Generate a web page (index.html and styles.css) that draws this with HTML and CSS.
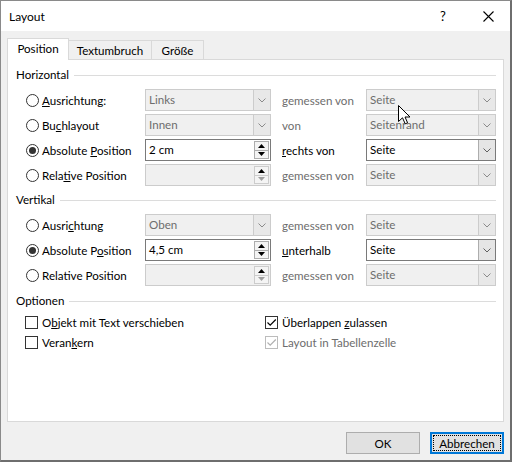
FILE: index.html
```html
<!DOCTYPE html>
<html lang="de">
<head>
<meta charset="utf-8">
<link rel="stylesheet" href="styles.css">
</head>
<body>
<div class="window">
  <div class="titlebar">
    <span class="title">Layout</span>
    <span class="tb-help">?</span>
    <span class="tb-close">
      <svg width="11" height="11" viewBox="0 0 11 11"><path d="M0.5 0.5 L10.5 10.5 M10.5 0.5 L0.5 10.5" stroke="#000" stroke-width="1.1" fill="none"/></svg>
    </span>
  </div>

  <div class="body">
    <div class="tabs">
      <div class="tab tab-active tab-pos">Position</div>
      <div class="tab tab-wrap">Textumbruch</div>
      <div class="tab tab-size">Größe</div>
    </div>

    <div class="panel">
      <div class="group-head"><span>Horizontal</span><div class="rule"></div></div>
      <div class="grid">
        <label class="opt"><span class="radio"></span><span><u>A</u>usrichtung:</span></label>
        <div class="combo disabled"><span class="combo-text">Links</span><span class="combo-btn"><svg width="8" height="5" viewBox="0 0 8 5"><path d="M0.5 0.5 L4 4 L7.5 0.5" stroke="#8a8a8a" fill="none"/></svg></span></div>
        <span class="lbl2 dim">gemessen von</span>
        <div class="combo disabled"><span class="combo-text">Seite</span><span class="combo-btn"><svg width="8" height="5" viewBox="0 0 8 5"><path d="M0.5 0.5 L4 4 L7.5 0.5" stroke="#8a8a8a" fill="none"/></svg></span></div>

        <label class="opt"><span class="radio"></span><span>Bu<u>c</u>hlayout</span></label>
        <div class="combo disabled"><span class="combo-text">Innen</span><span class="combo-btn"><svg width="8" height="5" viewBox="0 0 8 5"><path d="M0.5 0.5 L4 4 L7.5 0.5" stroke="#8a8a8a" fill="none"/></svg></span></div>
        <span class="lbl2 dim">von</span>
        <div class="combo disabled"><span class="combo-text">Seitenrand</span><span class="combo-btn"><svg width="8" height="5" viewBox="0 0 8 5"><path d="M0.5 0.5 L4 4 L7.5 0.5" stroke="#8a8a8a" fill="none"/></svg></span></div>

        <label class="opt"><span class="radio checked"></span><span>Absolute <u>P</u>osition</span></label>
        <div class="spin"><span class="spin-text">2 cm</span><span class="spin-btns"><span class="spin-up"><svg width="7" height="4" viewBox="0 0 7 4"><path d="M0 4 L3.5 0 L7 4 Z" fill="#000"/></svg></span><span class="spin-down"><svg width="7" height="4" viewBox="0 0 7 4"><path d="M0 0 L3.5 4 L7 0 Z" fill="#000"/></svg></span></span></div>
        <span class="lbl2"><u>r</u>echts von</span>
        <div class="combo"><span class="combo-text">Seite</span><span class="combo-btn"><svg width="8" height="5" viewBox="0 0 8 5"><path d="M0.5 0.5 L4 4 L7.5 0.5" stroke="#606060" fill="none"/></svg></span></div>

        <label class="opt"><span class="radio"></span><span>Rela<u>t</u>ive Position</span></label>
        <div class="spin disabled"><div class="spin-field"></div><span class="spin-btns"><span class="spin-up"><svg width="7" height="4" viewBox="0 0 7 4"><path d="M0 4 L3.5 0 L7 4 Z" fill="#000"/></svg></span><span class="spin-down"><svg width="7" height="4" viewBox="0 0 7 4"><path d="M0 0 L3.5 4 L7 0 Z" fill="#a0a0a0"/></svg></span></span></div>
        <span class="lbl2 dim">gemessen von</span>
        <div class="combo disabled"><span class="combo-text">Seite</span><span class="combo-btn"><svg width="8" height="5" viewBox="0 0 8 5"><path d="M0.5 0.5 L4 4 L7.5 0.5" stroke="#8a8a8a" fill="none"/></svg></span></div>
      </div>

      <div class="group-head gh-vert"><span>Vertikal</span><div class="rule"></div></div>
      <div class="grid">
        <label class="opt"><span class="radio"></span><span>Ausri<u>c</u>htung</span></label>
        <div class="combo disabled"><span class="combo-text">Oben</span><span class="combo-btn"><svg width="8" height="5" viewBox="0 0 8 5"><path d="M0.5 0.5 L4 4 L7.5 0.5" stroke="#8a8a8a" fill="none"/></svg></span></div>
        <span class="lbl2 dim">gemessen von</span>
        <div class="combo disabled"><span class="combo-text">Seite</span><span class="combo-btn"><svg width="8" height="5" viewBox="0 0 8 5"><path d="M0.5 0.5 L4 4 L7.5 0.5" stroke="#8a8a8a" fill="none"/></svg></span></div>

        <label class="opt"><span class="radio checked"></span><span>Absolute P<u>o</u>sition</span></label>
        <div class="spin"><span class="spin-text">4,5 cm</span><span class="spin-btns"><span class="spin-up"><svg width="7" height="4" viewBox="0 0 7 4"><path d="M0 4 L3.5 0 L7 4 Z" fill="#000"/></svg></span><span class="spin-down"><svg width="7" height="4" viewBox="0 0 7 4"><path d="M0 0 L3.5 4 L7 0 Z" fill="#000"/></svg></span></span></div>
        <span class="lbl2"><u>u</u>nterhalb</span>
        <div class="combo"><span class="combo-text">Seite</span><span class="combo-btn"><svg width="8" height="5" viewBox="0 0 8 5"><path d="M0.5 0.5 L4 4 L7.5 0.5" stroke="#606060" fill="none"/></svg></span></div>

        <label class="opt"><span class="radio"></span><span>Relat<u>i</u>ve Position</span></label>
        <div class="spin disabled"><div class="spin-field"></div><span class="spin-btns"><span class="spin-up"><svg width="7" height="4" viewBox="0 0 7 4"><path d="M0 4 L3.5 0 L7 4 Z" fill="#000"/></svg></span><span class="spin-down"><svg width="7" height="4" viewBox="0 0 7 4"><path d="M0 0 L3.5 4 L7 0 Z" fill="#a0a0a0"/></svg></span></span></div>
        <span class="lbl2 dim">gemessen von</span>
        <div class="combo disabled"><span class="combo-text">Seite</span><span class="combo-btn"><svg width="8" height="5" viewBox="0 0 8 5"><path d="M0.5 0.5 L4 4 L7.5 0.5" stroke="#8a8a8a" fill="none"/></svg></span></div>
      </div>

      <div class="group-head gh-opt"><span>Optionen</span><div class="rule"></div></div>
      <div class="checks">
        <label class="opt"><span class="check"></span><span>O<u>b</u>jekt mit Text verschieben</span></label>
        <label class="opt"><span class="check checked"><svg width="11" height="11" viewBox="0 0 11 11"><path d="M1.5 5.5 L4.2 8.2 L9.8 2.5" stroke="#000" stroke-width="1.2" fill="none"/></svg></span><span>Überlappen <u>z</u>ulassen</span></label>
        <label class="opt"><span class="check"></span><span>Veran<u>k</u>ern</span></label>
        <label class="opt dim"><span class="check checked disabled"><svg width="11" height="11" viewBox="0 0 11 11"><path d="M1.5 5.5 L4.2 8.2 L9.8 2.5" stroke="#b0b0b0" stroke-width="1.2" fill="none"/></svg></span><span>Layout in Tabellenzelle</span></label>
      </div>
    </div>

    <div class="buttons">
      <button class="btn">OK</button>
      <button class="btn btn-default"><span class="focus">Abbrechen</span></button>
    </div>
  </div>

  <svg class="cursor" width="13" height="20" viewBox="0 0 13 20">
    <path d="M0.5 0.5 L0.5 16.5 L4.5 12.8 L7.2 18.8 L9.6 17.8 L7 12 L12 12 Z" fill="#fff" stroke="#000" stroke-width="1" stroke-linejoin="miter"/>
  </svg>
</div>
</body>
</html>
```
FILE: styles.css
```css
* { box-sizing: border-box; }

html, body {
  margin: 0;
  padding: 0;
  background: #ffffff;
}

body {
  font-family: "Lato", "Segoe UI", sans-serif;
  font-size: 11.6px;
  color: #000;
}

.window {
  position: relative;
  width: 512px;
  height: 462px;
  border-top: 1px solid #8a8a8a;
  border-left: 1px solid #8a8a8a;
  border-right: 2px solid #6e6e6e;
  border-bottom: 2px solid #6e6e6e;
  display: flex;
  flex-direction: column;
  background: #f0f0f0;
}

/* Title bar */
.titlebar {
  height: 30px;
  background: #ffffff;
  display: flex;
  align-items: center;
  flex: none;
}
.title {
  margin-left: 8px;
  font-size: 12px;
  flex: 1;
}
.tb-help {
  width: 20px;
  text-align: center;
  font-size: 13px;
  margin-right: 30px;
}
.tb-close {
  width: 11px;
  height: 11px;
  margin-right: 16px;
  display: flex;
}

/* Body */
.body {
  flex: 1;
  display: flex;
  flex-direction: column;
  padding: 7px 6px 0 6px;
}

.tabs {
  display: flex;
  align-items: flex-end;
  height: 21px;
  position: relative;
  z-index: 2;
}
.tab {
  height: 19px;
  border: 1px solid #d9d9d9;
  border-bottom: none;
  background: #f0f0f0;
  text-align: center;
  line-height: 18px;
  margin-left: -1px;
  padding-top: 1px;
}
.tab-pos { width: 62px; margin-left: 0; }
.tab-wrap { width: 84px; }
.tab-size { width: 53px; }
.tab-active {
  height: 22px;
  background: #ffffff;
  margin-bottom: -1px;
  position: relative;
  z-index: 3;
  padding-top: 1px;
  line-height: 18px;
}

.panel {
  height: 363px;
  background: #ffffff;
  border: 1px solid #d9d9d9;
  padding: 7px 7px 0 8px;
  display: flex;
  flex-direction: column;
}

.group-head {
  height: 16px;
  display: flex;
  align-items: center;
  gap: 5px;
  line-height: 16px;
}
.group-head .rule {
  flex: 1;
  height: 1px;
  background: #dcdcdc;
  margin-top: 1px;
}
.gh-vert { margin-top: 6px; }
.gh-opt { margin-top: 7px; }

.grid {
  margin-top: 6px;
  margin-left: 10px;
  display: grid;
  grid-template-columns: 119px 126px 95px 130px;
  grid-auto-rows: 22px;
  row-gap: 3px;
  align-items: center;
}

.opt {
  display: flex;
  align-items: center;
  gap: 3px;
  white-space: nowrap;
}

.radio {
  width: 13px;
  height: 13px;
  border: 1px solid #333333;
  border-radius: 50%;
  background: #ffffff;
  display: flex;
  align-items: center;
  justify-content: center;
  flex: none;
}
.radio.checked::after {
  content: "";
  width: 7px;
  height: 7px;
  border-radius: 50%;
  background: #333333;
}

.lbl2 {
  padding-left: 11px;
  white-space: nowrap;
}
.dim { color: #6d6d6d; }

/* Combo boxes */
.combo {
  height: 22px;
  border: 1px solid #7a7a7a;
  background: #ffffff;
  display: flex;
  align-items: stretch;
}
.combo-text {
  flex: 1;
  padding-left: 3px;
  line-height: 20px;
  white-space: nowrap;
  overflow: hidden;
}
.combo-btn {
  width: 17px;
  flex: none;
  background: #e5e5e5;
  border-left: 1px solid #adadad;
  display: flex;
  align-items: center;
  justify-content: center;
}
.combo.disabled {
  border-color: #cccccc;
  background: #f0f0f0;
  color: #6d6d6d;
}
.combo.disabled .combo-btn {
  background: #e8e8e8;
  border-left-color: #cccccc;
}

/* Spin boxes */
.spin {
  height: 22px;
  border: 1px solid #7a7a7a;
  background: #ffffff;
  display: flex;
}
.spin-text {
  flex: 1;
  padding-left: 3px;
  line-height: 20px;
}
.spin-field { flex: 1; }
.spin-btns {
  width: 16px;
  flex: none;
  display: flex;
  flex-direction: column;
  padding: 1px 1px 1px 0;
}
.spin-up, .spin-down {
  flex: 1;
  border: 1px solid #adadad;
  background: #f4f4f4;
  display: flex;
  align-items: center;
  justify-content: center;
}
.spin-down { border-top: none; }
.spin.disabled {
  border-color: #cccccc;
  background: #f0f0f0;
}
.spin.disabled .spin-up, .spin.disabled .spin-down {
  border-color: #cccccc;
  background: #f4f4f4;
}

/* Check boxes */
.checks {
  margin-top: 3px;
  margin-left: 9px;
  display: grid;
  grid-template-columns: 240px 1fr;
  grid-auto-rows: 20px;
  align-items: center;
}
.checks .opt { gap: 4px; }
.check {
  width: 13px;
  height: 13px;
  border: 1px solid #333333;
  background: #ffffff;
  flex: none;
  display: flex;
  align-items: center;
  justify-content: center;
}
.check.disabled { border-color: #bcbcbc; }

u { text-decoration: underline; text-underline-offset: 1px; }

/* Buttons */
.buttons {
  margin-top: 10px;
  display: flex;
  justify-content: flex-end;
  gap: 10px;
}
.btn {
  width: 74px;
  height: 22px;
  border: 1px solid #adadad;
  background: #e1e1e1;
  font-family: inherit;
  font-size: 11.6px;
  color: #000;
  padding: 0;
  display: flex;
  align-items: center;
  justify-content: center;
}
.btn-default {
  border: 2px solid #0078d7;
  padding: 1px;
}
.focus {
  flex: 1;
  align-self: stretch;
  border: 1px dotted #000;
  display: flex;
  align-items: center;
  justify-content: center;
}

.cursor {
  position: absolute;
  left: 397px;
  top: 104px;
}
```
